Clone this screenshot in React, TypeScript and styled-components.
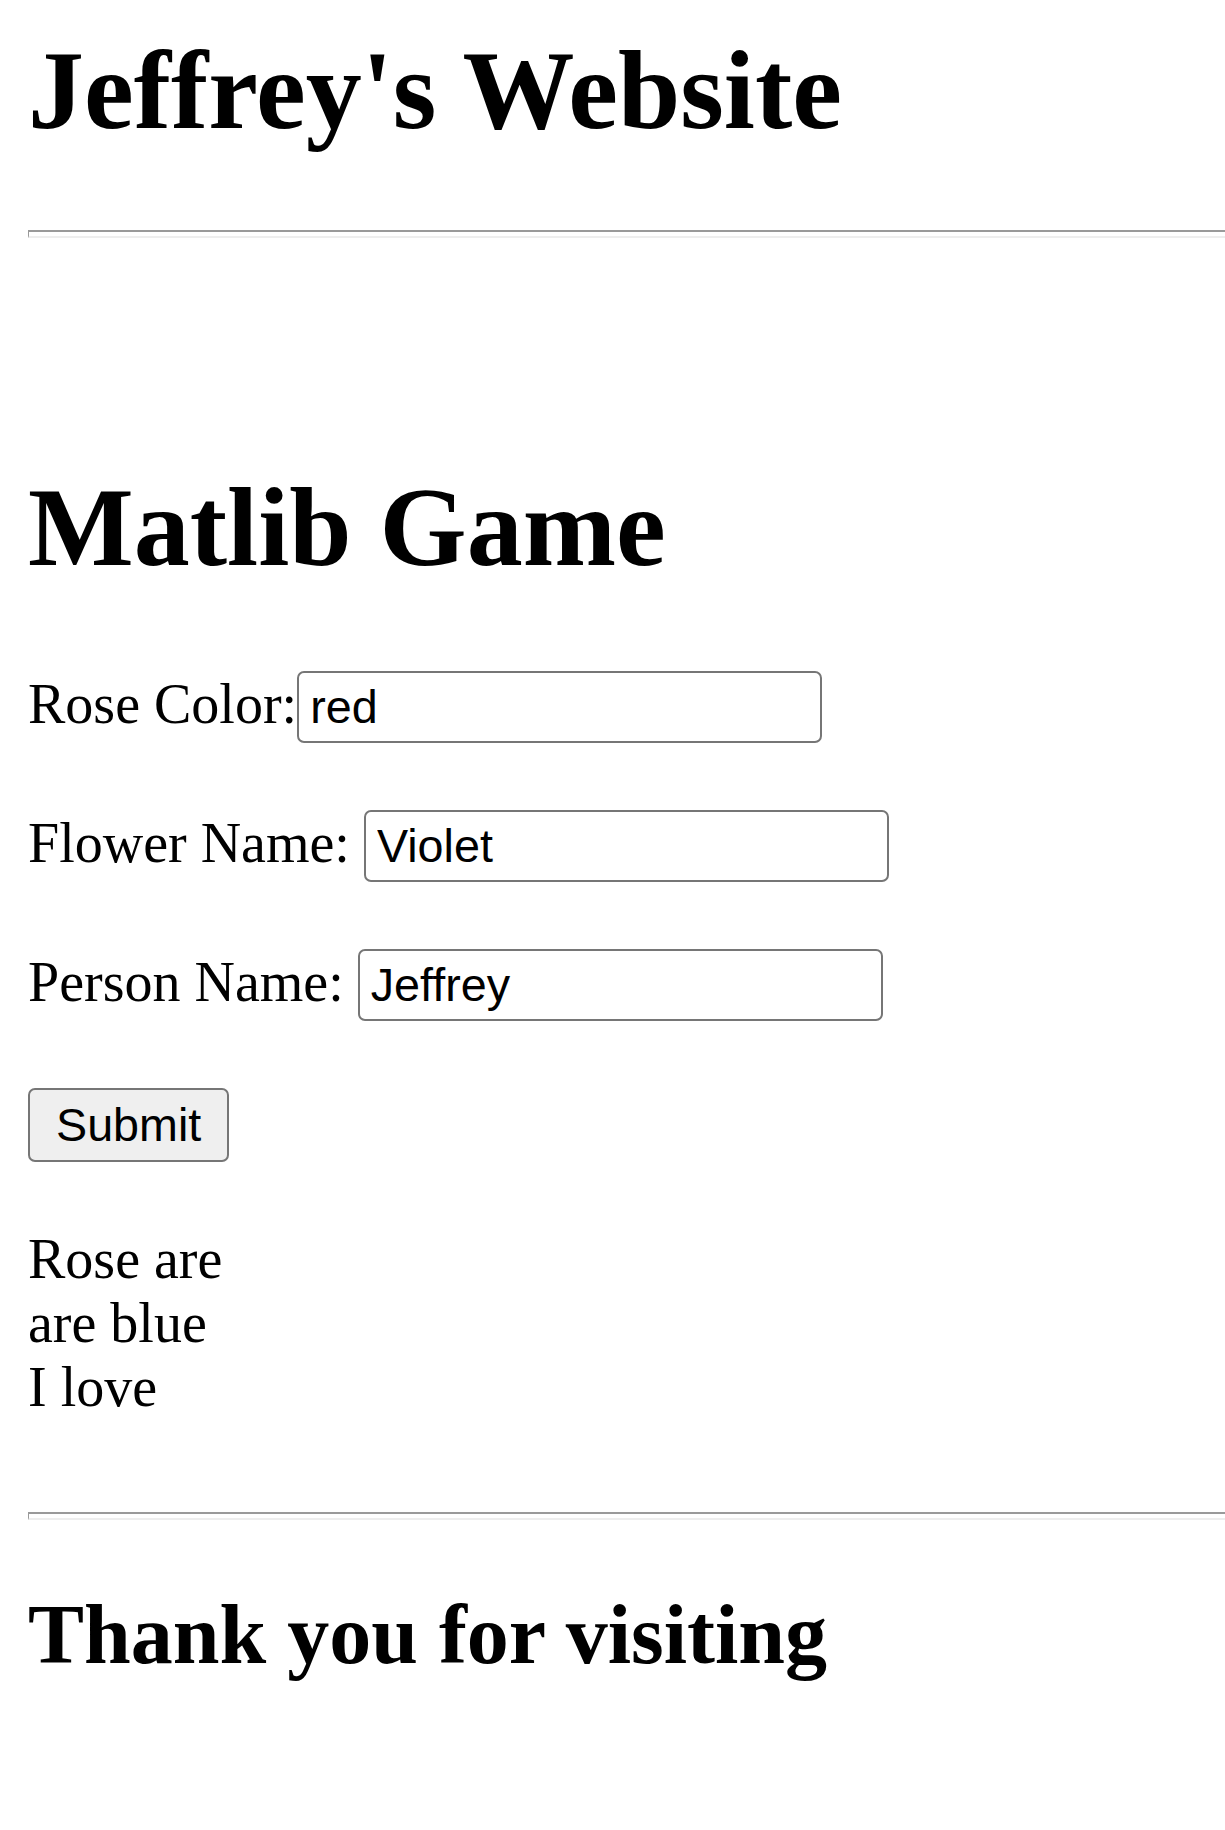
import React from "react";
import styled, { createGlobalStyle } from "styled-components";

const GlobalStyle = createGlobalStyle`
  html, body {
    margin: 0;
    padding: 0;
    background: #ffffff;
  }
  body {
    font-family: "Liberation Serif", "Times New Roman", serif;
    color: #000000;
  }
`;

const Page = styled.div`
  display: flex;
  flex-direction: column;
  align-items: flex-start;
  padding: 26px 0 90px 28px;
  font-family: "Liberation Serif", "Times New Roman", serif;
  font-size: 56px;
  line-height: normal;
  color: #000;
`;

const SiteTitle = styled.h1`
  margin: 0;
  font-size: 112px;
  font-weight: 700;
  line-height: normal;
`;

const Rule = styled.div<{ $top: number }>`
  align-self: stretch;
  margin-top: ${(p) => p.$top}px;
  height: 4px;
  border-top: 2px solid #9a9a9a;
  border-left: 1px solid #9a9a9a;
  border-bottom: 2px solid #eeeeee;
`;

const GameTitle = styled.h1`
  margin: 225px 0 0;
  font-size: 112px;
  font-weight: 700;
  line-height: normal;
`;

const Form = styled.form`
  display: flex;
  flex-direction: column;
  align-items: flex-start;
  gap: 67px;
  margin-top: 79px;
`;

const FieldRow = styled.div<{ $gap: number }>`
  display: flex;
  align-items: baseline;
  gap: ${(p) => p.$gap}px;
`;

const Label = styled.label`
  font-size: 56px;
  white-space: nowrap;
`;

const TextInput = styled.input`
  box-sizing: border-box;
  width: 525px;
  height: 72px;
  margin: 0;
  padding: 0 11px;
  border: 2px solid #767676;
  border-radius: 7px;
  background: #ffffff;
  color: #000;
  font-family: "Liberation Sans", Arial, sans-serif;
  font-size: 46.7px;
  outline: none;
`;

const SubmitButton = styled.button`
  box-sizing: border-box;
  height: 74px;
  margin: 0;
  padding: 0 26px;
  border: 2px solid #767676;
  border-radius: 7px;
  background: #efefef;
  color: #000;
  font-family: "Liberation Sans", Arial, sans-serif;
  font-size: 46.7px;
  cursor: pointer;
`;

const Poem = styled.div`
  display: flex;
  flex-direction: column;
  margin-top: 65px;
`;

const PoemLine = styled.span`
  font-size: 56px;
  line-height: normal;
`;

const Farewell = styled.h2`
  margin: 66px 0 0;
  font-size: 84px;
  font-weight: 700;
  line-height: normal;
`;

const fields = [
  { id: "rose", label: "Rose Color:", value: "red", gap: 0 },
  { id: "flower", label: "Flower Name:", value: "Violet", gap: 14 },
  { id: "person", label: "Person Name:", value: "Jeffrey", gap: 14 },
];

export default function App() {
  return (
    <>
      <GlobalStyle />
      <Page>
        <SiteTitle>Jeffrey's Website</SiteTitle>
        <Rule $top={75} />
        <GameTitle>Matlib Game</GameTitle>
        <Form onSubmit={(e) => e.preventDefault()}>
          {fields.map((f) => (
            <FieldRow key={f.id} $gap={f.gap}>
              <Label htmlFor={f.id}>{f.label}</Label>
              <TextInput id={f.id} type="text" defaultValue={f.value} />
            </FieldRow>
          ))}
          <SubmitButton type="submit">Submit</SubmitButton>
        </Form>
        <Poem>
          <PoemLine>Rose are</PoemLine>
          <PoemLine>are blue</PoemLine>
          <PoemLine>I love</PoemLine>
        </Poem>
        <Rule $top={93} />
        <Farewell>Thank you for visiting</Farewell>
      </Page>
    </>
  );
}
